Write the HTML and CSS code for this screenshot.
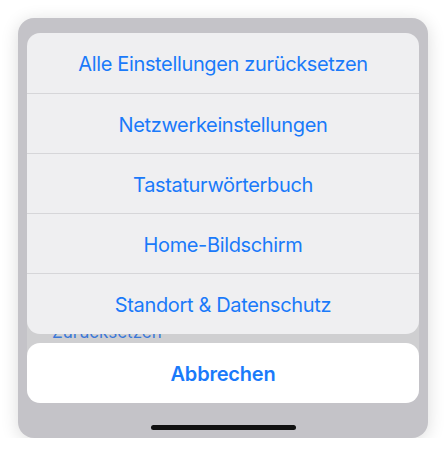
FILE: index.html
```html
<!DOCTYPE html>
<html lang="de">

<head>
  <meta charset="UTF-8">
  <meta name="viewport" content="width=device-width, initial-scale=1.0">
  <title>Zurücksetzen</title>
  <link rel="stylesheet" href="styles.css">
</head>

<body>
  <div class="screen">
    <!-- settings list underneath the dimmed overlay -->
    <div class="behind">
      <span class="behind-link">Zurücksetzen</span>
    </div>

    <div class="sheet">
      <div class="action-group">
        <button class="action">Alle Einstellungen zurücksetzen</button>
        <button class="action">Netzwerkeinstellungen</button>
        <button class="action">Tastaturwörterbuch</button>
        <button class="action">Home-Bildschirm</button>
        <button class="action">Standort &amp; Datenschutz</button>
      </div>
      <button class="action cancel">Abbrechen</button>
    </div>

    <div class="home-indicator"></div>
  </div>
</body>

</html>
```

FILE: styles.css
```css
body {
  margin: 0;
  background: #fff;
  font-family: Inter, "Noto Sans", sans-serif;
}

.screen {
  position: relative;
  width: 410px;
  height: 420px;
  margin: 18px 0 0 18px;
  padding: 15px 9px 0;
  box-sizing: border-box;
  background: #c4c3c8;
  border-radius: 16px;
  box-shadow: 0 3px 18px rgba(0, 0, 0, 0.14);
  overflow: hidden;
}

.behind {
  position: absolute;
  left: 9px;
  right: 9px;
  top: 301px;
  height: 40px;
  background: #cfcfd1;
}

.behind-link {
  position: absolute;
  left: 25px;
  top: 3px;
  font-size: 17px;
  color: #3b78d8;
}

.sheet {
  position: relative;
  display: flex;
  flex-direction: column;
  gap: 9px;
}

.action-group {
  display: flex;
  flex-direction: column;
  background: #efeff1;
  border-radius: 13px;
  overflow: hidden;
}

.action {
  height: 60px;
  border: none;
  background: transparent;
  font-family: inherit;
  font-size: 20px;
  letter-spacing: -0.35px;
  color: #1a7afa;
  padding: 2px 0 0;
}

.action-group .action + .action {
  border-top: 1px solid #d6d6d9;
}

.action-group .action:last-child {
  height: 61px;
}

.cancel {
  background: #fff;
  border-radius: 13px;
  font-weight: 600;
  letter-spacing: -0.2px;
}

.home-indicator {
  width: 145px;
  height: 5px;
  margin: 22px auto 0;
  background: #111;
  border-radius: 3px;
}
```
